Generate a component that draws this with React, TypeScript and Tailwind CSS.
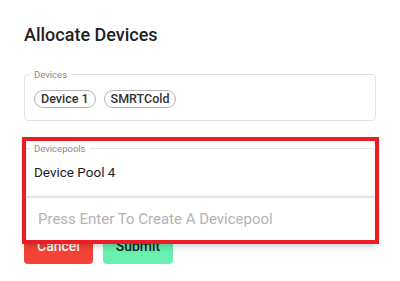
import React from "react";

const devices = ["Device 1", "SMRTCold"];

export default function App() {
  return (
    <div className="relative min-h-screen bg-white font-['Roboto',sans-serif] text-[#212121]">
      <div className="px-6 pt-[23px]">
        <h2 className="text-[18px] leading-6 font-medium text-[#222]">
          Allocate Devices
        </h2>

        <fieldset className="mt-[22px] rounded border border-[#e3e3e3] px-[5px] pt-[10px] pb-[12px]">
          <legend className="px-1 text-[9.5px] leading-[11px] text-[#8a8a8a]">
            Devices
          </legend>
          <div className="flex gap-2 px-1">
            {devices.map((d) => (
              <span
                key={d}
                className="flex h-[18px] items-center rounded-full border border-[#b5b5b5] px-[6px] text-[12.5px] leading-4 font-medium text-[#333]"
              >
                {d}
              </span>
            ))}
          </div>
        </fieldset>

        <div className="relative mt-[22px]">
          <fieldset className="rounded-t border border-b-0 border-[#e3e3e3] px-[5px] pt-[8px] pb-[14px]">
            <legend className="px-1 text-[9.5px] leading-[11px] text-[#8a8a8a]">
              Devicepools
            </legend>
            <div className="px-1 text-[13.5px] leading-5 text-[#222]">
              Device Pool 4
            </div>
          </fieldset>
          <div className="absolute top-full right-0 left-0 z-10 border-t-2 border-[#e4e4e4] bg-white px-[14px] pt-[11px] pb-[15px] text-[15px] leading-5 text-[#b3b3b3] shadow-[0_3px_6px_rgba(0,0,0,0.18)]">
            Press Enter To Create A Devicepool
          </div>
        </div>

        <div className="mt-8 flex gap-[10px]">
          <button className="h-9 w-[69px] rounded-[4px] bg-[#f44336] text-[14px] font-medium text-white">
            Cancel
          </button>
          <button className="h-9 w-[70px] rounded-[4px] bg-[#69f0ae] text-[14px] font-medium text-[#1c1c1c]">
            Submit
          </button>
        </div>
      </div>

      <div className="pointer-events-none absolute top-[137px] left-[22px] z-20 h-[107px] w-[357px] border-4 border-[#ed1c24]" />
    </div>
  );
}
